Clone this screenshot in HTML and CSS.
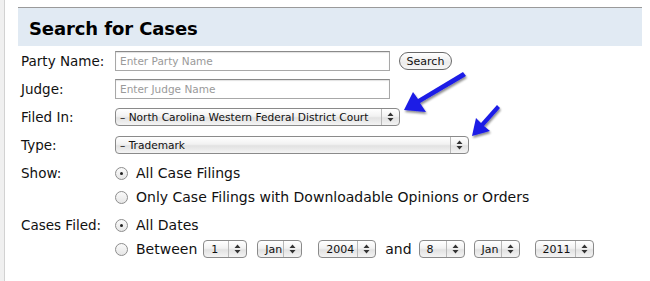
FILE: index.html
```html
<!DOCTYPE html>
<html>
<head>
<meta charset="utf-8">
<link rel="stylesheet" href="styles.css">
</head>
<body>
<div class="page">
  <div class="strip"></div>
  <div class="main">
    <div class="header"><h1 class="title">Search for Cases</h1></div>
    <div class="form">
      <div class="row r1">
        <div class="label">Party Name:</div>
        <div class="field"><span class="input">Enter Party Name</span><span class="button">Search</span></div>
      </div>
      <div class="row r2">
        <div class="label">Judge:</div>
        <div class="field"><span class="input">Enter Judge Name</span></div>
      </div>
      <div class="row r3">
        <div class="label">Filed In:</div>
        <div class="field"><span class="select w-court"><span class="sel-text">– North Carolina Western Federal District Court</span><span class="sel-arrows"><svg width="7" height="10" viewBox="0 0 7 10"><path d="M3.5 0.5 L6.5 4 H0.5 Z M3.5 9.5 L6.5 6 H0.5 Z" fill="#333"/></svg></span></span></div>
      </div>
      <div class="row r4">
        <div class="label">Type:</div>
        <div class="field"><span class="select w-type"><span class="sel-text">– Trademark</span><span class="sel-arrows"><svg width="7" height="10" viewBox="0 0 7 10"><path d="M3.5 0.5 L6.5 4 H0.5 Z M3.5 9.5 L6.5 6 H0.5 Z" fill="#333"/></svg></span></span></div>
      </div>
      <div class="row r5">
        <div class="label">Show:</div>
        <div class="field"><span class="radio on"></span><span class="opt">All Case Filings</span></div>
      </div>
      <div class="row r6">
        <div class="label"></div>
        <div class="field"><span class="radio"></span><span class="opt">Only Case Filings with Downloadable Opinions or Orders</span></div>
      </div>
      <div class="row r7">
        <div class="label">Cases Filed:</div>
        <div class="field"><span class="radio on"></span><span class="opt">All Dates</span></div>
      </div>
      <div class="row r8">
        <div class="label"></div>
        <div class="field dates">
          <span class="radio"></span><span class="opt">Between</span>
          <span class="select small w-day"><span class="sel-text">1</span><span class="sel-arrows"><svg width="7" height="10" viewBox="0 0 7 10"><path d="M3.5 0.5 L6.5 4 H0.5 Z M3.5 9.5 L6.5 6 H0.5 Z" fill="#333"/></svg></span></span>
          <span class="select small w-mon"><span class="sel-text">Jan</span><span class="sel-arrows"><svg width="7" height="10" viewBox="0 0 7 10"><path d="M3.5 0.5 L6.5 4 H0.5 Z M3.5 9.5 L6.5 6 H0.5 Z" fill="#333"/></svg></span></span>
          <span class="select small w-year"><span class="sel-text">2004</span><span class="sel-arrows"><svg width="7" height="10" viewBox="0 0 7 10"><path d="M3.5 0.5 L6.5 4 H0.5 Z M3.5 9.5 L6.5 6 H0.5 Z" fill="#333"/></svg></span></span>
          <span class="opt and">and</span>
          <span class="select small w-day2"><span class="sel-text">8</span><span class="sel-arrows"><svg width="7" height="10" viewBox="0 0 7 10"><path d="M3.5 0.5 L6.5 4 H0.5 Z M3.5 9.5 L6.5 6 H0.5 Z" fill="#333"/></svg></span></span>
          <span class="select small w-mon2"><span class="sel-text">Jan</span><span class="sel-arrows"><svg width="7" height="10" viewBox="0 0 7 10"><path d="M3.5 0.5 L6.5 4 H0.5 Z M3.5 9.5 L6.5 6 H0.5 Z" fill="#333"/></svg></span></span>
          <span class="select small w-year2"><span class="sel-text">2011</span><span class="sel-arrows"><svg width="7" height="10" viewBox="0 0 7 10"><path d="M3.5 0.5 L6.5 4 H0.5 Z M3.5 9.5 L6.5 6 H0.5 Z" fill="#333"/></svg></span></span>
        </div>
      </div>
    </div>
  </div>
  <svg class="arrows" width="650" height="281" viewBox="0 0 650 281">
    <defs>
      <filter id="sh" x="-20%" y="-20%" width="140%" height="140%">
        <feGaussianBlur in="SourceAlpha" stdDeviation="1.2"/>
        <feOffset dx="1" dy="1.5"/>
        <feComponentTransfer><feFuncA type="linear" slope="0.45"/></feComponentTransfer>
        <feMerge><feMergeNode/><feMergeNode in="SourceGraphic"/></feMerge>
      </filter>
    </defs>
    <g filter="url(#sh)" fill="#1c1ce6" stroke="none">
      <path d="M463 72 L466 76 L420 103 L426 112 L404 110 L413 92 L418 99 Z"/>
      <path d="M497 105 L500 108 L484 126 L490 131 L472 136 L476 118 L481 123 Z"/>
    </g>
  </svg>
</div>
</body>
</html>
```
FILE: styles.css
```css
html, body {
  margin: 0;
  padding: 0;
  background: #fff;
}
body {
  font-family: "DejaVu Sans", Verdana, sans-serif;
  color: #111;
}
.page {
  position: relative;
  display: flex;
  width: 650px;
  height: 281px;
  overflow: hidden;
}
.strip {
  width: 4px;
  background: #f0f0f0;
  border-right: 1px solid #d2d2d2;
  flex: none;
}
.main {
  padding-left: 13px;
  padding-top: 7px;
  flex: none;
}
.header {
  width: 624px;
  height: 38px;
  background: #e1eaf3;
  border-top: 1px solid #9a9a9a;
  display: flex;
  align-items: center;
}
.title {
  margin: 2px 0 0 11px;
  font-size: 18px;
  font-weight: bold;
  color: #000;
  letter-spacing: -0.1px;
}
.form {
  padding-left: 3px;
  padding-top: 1px;
}
.row {
  display: flex;
  align-items: center;
  font-size: 13.5px;
}
.r1, .r2, .r3, .r4 { height: 28px; }
.r5 { height: 24px; margin-top: 2px; }
.r6, .r8 { height: 24px; }
.r7 { height: 24px; margin-top: 4px; }
.label {
  width: 94px;
  flex: none;
}
.field {
  display: flex;
  align-items: center;
}
.input {
  box-sizing: border-box;
  width: 275px;
  height: 20px;
  border: 1px solid #a8a8a8;
  border-top-color: #8a8a8a;
  box-shadow: inset 0 1px 1px rgba(0,0,0,0.12);
  font-family: "DejaVu Sans", sans-serif;
  font-size: 10.5px;
  color: #9a9a9a;
  padding-left: 4px;
  display: flex;
  align-items: center;
}
.button {
  margin-left: 9px;
  box-sizing: border-box;
  height: 18px;
  width: 53px;
  border: 1px solid #6a6a6a;
  border-radius: 9px;
  background: linear-gradient(#ffffff, #ececec 60%, #f6f6f6);
  font-size: 11px;
  display: flex;
  align-items: center;
  justify-content: center;
  color: #111;
}
.select {
  box-sizing: border-box;
  height: 18px;
  border: 1px solid #8a8a8a;
  border-radius: 4px;
  background: linear-gradient(#ffffff, #f2f2f2 45%, #e2e2e2 55%, #f4f4f4);
  display: flex;
  align-items: center;
  font-size: 10.6px;
  color: #111;
  flex: none;
}
.sel-text {
  flex: 1;
  padding-left: 4px;
  white-space: nowrap;
  overflow: hidden;
}
.sel-arrows {
  width: 17px;
  height: 16px;
  border-left: 1px solid #b8b8b8;
  display: flex;
  align-items: center;
  justify-content: center;
  flex: none;
}
.w-court { width: 285px; }
.w-type { width: 354px; }
.small { font-size: 11px; }
.small .sel-text { padding-left: 7px; }
.w-day { width: 44px; margin-left: 6px; }
.w-mon { width: 45px; margin-left: 10px; }
.w-year { width: 58px; margin-left: 16px; }
.w-day2 { width: 46px; margin-left: 7px; }
.w-mon2 { width: 46px; margin-left: 9px; }
.w-year2 { width: 59px; margin-left: 15px; }
.radio {
  box-sizing: border-box;
  width: 13px;
  height: 13px;
  border: 1px solid #8d8d8d;
  border-radius: 50%;
  background: linear-gradient(#fafafa, #e6e6e6);
  margin-left: 0;
  position: relative;
  flex: none;
}
.radio.on::after {
  content: "";
  position: absolute;
  left: 4px;
  top: 4px;
  width: 3px;
  height: 3px;
  border-radius: 50%;
  background: #222;
}
.opt {
  margin-left: 8px;
  font-size: 14px;
  white-space: nowrap;
}
.and {
  margin-left: 9px;
}
.arrows {
  position: absolute;
  left: 0;
  top: 0;
  pointer-events: none;
}
```
